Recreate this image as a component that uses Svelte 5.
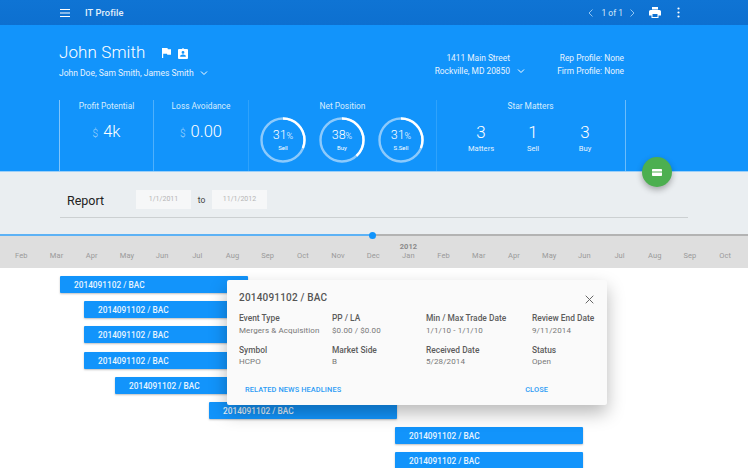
<script>
	const months = ['Feb', 'Mar', 'Apr', 'May', 'Jun', 'Jul', 'Aug', 'Sep', 'Oct', 'Nov', 'Dec', 'Jan', 'Feb', 'Mar', 'Apr', 'May', 'Jun', 'Jul', 'Aug', 'Sep', 'Oct'];
	const bars = [60, 84, 84, 84, 115, 209, 395, 395];
	const rings = [
		{ pct: 31, label: 'Sell' },
		{ pct: 38, label: 'Buy' },
		{ pct: 31, label: 'S.Sell' }
	];
	const stars = [
		{ n: 3, label: 'Matters' },
		{ n: 1, label: 'Sell' },
		{ n: 3, label: 'Buy' }
	];
	const fields = [
		['Event Type', 'Mergers & Acquisition'],
		['PP / LA', '$0.00 / $0.00'],
		['Min / Max Trade Date', '1/1/10 - 1/1/10'],
		['Review End Date', '9/11/2014'],
		['Symbol', 'HCPO'],
		['Market Side', 'B'],
		['Received Date', '5/28/2014'],
		['Status', 'Open']
	];
	const c = 2 * Math.PI * 21.5;
</script>

<div class="page">
	<header class="topbar">
		<svg class="menu" width="12" height="10" viewBox="0 0 12 10"><path d="M1 1.500h10M1 5h10M1 8.500h10" stroke="#fff" stroke-width="1.200" /></svg>
		<span class="apptitle">IT Profile</span>
		<div class="tools">
			<svg width="7" height="10" viewBox="0 0 7 10"><path d="M5.500 1.500 2 5l3.500 3.500" fill="none" stroke="#8fc4f2" stroke-width="1" /></svg>
			<span class="pager">1 of 1</span>
			<svg width="7" height="10" viewBox="0 0 7 10"><path d="M1.500 1.500 5 5 1.500 8.500" fill="none" stroke="#8fc4f2" stroke-width="1" /></svg>
			<svg class="print" width="12" height="11" viewBox="0 0 12 11"><path fill="#fff" d="M3 0h6v2.500H3zM1.500 3h9A1.500 1.500 0 0 1 12 4.500V8.500H9.500V11h-7V8.500H0V4.500A1.500 1.500 0 0 1 1.500 3zM3.500 7v3h5V7z" fill-rule="evenodd" /></svg>
			<svg class="more" width="3" height="11" viewBox="0 0 3 11"><circle cx="1.500" cy="1.500" r="1.100" fill="#fff" /><circle cx="1.500" cy="5.500" r="1.100" fill="#fff" /><circle cx="1.500" cy="9.500" r="1.100" fill="#fff" /></svg>
		</div>
	</header>

	<section class="hero">
		<div class="identity">
			<div class="who">
				<div class="name">
					<h1>John Smith</h1>
					<svg width="9" height="10" viewBox="0 0 9 10"><path fill="#fff" d="M0 0h5.500l.3 1.200H9v5.600H5.300L5 5.700H1.200V10H0z" /></svg>
					<svg width="10" height="11" viewBox="0 0 10 11"><path fill="#fff" fill-rule="evenodd" d="M1 1h2.800a1.300 1.300 0 0 1 2.400 0H9a1 1 0 0 1 1 1v8a1 1 0 0 1-1 1H1a1 1 0 0 1-1-1V2a1 1 0 0 1 1-1zM5 3a1.400 1.400 0 1 0 0 2.800A1.400 1.400 0 0 0 5 3zM2.200 8.800h5.600V8c0-1-1.900-1.500-2.800-1.500S2.200 7 2.200 8z" /></svg>
				</div>
				<div class="aliases">John Doe, Sam Smith, James Smith<svg class="chev" width="8" height="6" viewBox="0 0 8 6"><path d="M1 1.500 4 4.500l3-3" fill="none" stroke="#fff" stroke-width="1" /></svg></div>
			</div>
			<div class="address">
				<div>1411 Main Street</div>
				<div>Rockville, MD 20850<svg class="chev hang" width="8" height="6" viewBox="0 0 8 6"><path d="M1 1.500 4 4.500l3-3" fill="none" stroke="#fff" stroke-width="1" /></svg></div>
			</div>
			<div class="profiles">
				<div>Rep Profile: None</div>
				<div>Firm Profile: None</div>
			</div>
		</div>

		<div class="stats">
			<div class="stat">
				<h2>Profit Potential</h2>
				<div class="money"><small>$</small>4k</div>
			</div>
			<div class="stat">
				<h2>Loss Avoidance</h2>
				<div class="money"><small>$</small>0.00</div>
			</div>
			<div class="stat">
				<h2>Net Position</h2>
				<div class="rings">
					{#each rings as r}
						<div class="ring">
							<svg width="46" height="46" viewBox="0 0 46 46">
								<circle cx="23" cy="23" r="21.500" fill="none" stroke="#8ccafc" stroke-width="2.400" />
								<circle cx="23" cy="23" r="21.500" fill="none" stroke="#fff" stroke-width="2.400" stroke-dasharray="{(c * r.pct) / 100} {c}" transform="rotate(-90 23 23)" />
							</svg>
							<div class="ringtext">
								<span class="pct">{r.pct}<small>%</small></span>
								<span class="ringlabel">{r.label}</span>
							</div>
						</div>
					{/each}
				</div>
			</div>
			<div class="stat">
				<h2>Star Matters</h2>
				<div class="stars">
					{#each stars as s}
						<div class="star">
							<span class="num">{s.n}</span>
							<span class="starlabel">{s.label}</span>
						</div>
					{/each}
				</div>
			</div>
		</div>

		<button class="fab" aria-label="Summary">
			<svg width="10" height="7" viewBox="0 0 10 7"><path fill="#fff" d="M.8 0h8.400a.8.800 0 0 1 .8.800V2.600H0V.8A.8.800 0 0 1 .8 0zM0 3.400h10v2.800a.8.800 0 0 1-.8.800H.8a.8.800 0 0 1-.8-.8z" /></svg>
		</button>
	</section>

	<section class="report">
		<div class="reportrow">
			<h3>Report</h3>
			<div class="date">1/1/2011</div>
			<span class="to">to</span>
			<div class="date">11/1/2012</div>
		</div>
	</section>

	<div class="slider">
		<span class="dot"></span>
	</div>
	<div class="timeline">
		{#each months as m, i}
			<div class="month">
				{#if i === 11}<b>2012</b>{/if}
				{m}
			</div>
		{/each}
	</div>

	<section class="gantt">
		{#each bars as left}
			<div class="bar" style="margin-left: {left}px">2014091102 / BAC</div>
		{/each}

		<div class="popover">
			<div class="pophead">
				<h4>2014091102 / BAC</h4>
				<svg width="9" height="9" viewBox="0 0 9 9"><path d="M.7.7l7.600 7.600M8.300.7.700 8.300" stroke="#666" stroke-width="1" /></svg>
			</div>
			<div class="fields">
				{#each fields as [label, value]}
					<div class="field">
						<div class="flabel">{label}</div>
						<div class="fvalue">{value}</div>
					</div>
				{/each}
			</div>
			<div class="actions">
				<span>RELATED NEWS HEADLINES</span>
				<span>CLOSE</span>
			</div>
		</div>
	</section>
</div>

<style>
	:global(body) {
		margin: 0;
		overflow: hidden;
		background: #fff;
	}

	.page {
		position: relative;
		width: 748px;
		height: 468px;
		overflow: hidden;
		font-family: Roboto, 'Liberation Sans', sans-serif;
		color: #fff;
	}

	.topbar {
		height: 25px;
		display: flex;
		align-items: center;
		padding-left: 59px;
		background: linear-gradient(#0f74d4, #0d70d0);
		box-sizing: border-box;
	}

	.apptitle {
		margin-left: 14px;
		font-size: 9.300px;
		font-weight: 500;
		letter-spacing: 0.1px;
		color: #e3f0fb;
	}

	.tools {
		margin-left: auto;
		margin-right: 68px;
		display: flex;
		align-items: center;
	}

	.pager {
		margin: 0 6px 0 7px;
		font-size: 8.500px;
		color: #d5e7f8;
	}

	.print {
		margin-left: 13px;
	}

	.more {
		margin-left: 16px;
	}

	.hero {
		position: relative;
		height: 147px;
		box-sizing: border-box;
		background: #1294fb;
		border-bottom: 1px solid #9ccff8;
	}

	.identity {
		height: 75px;
		display: flex;
		padding: 18px 0 0 59px;
		box-sizing: border-box;
	}

	.who {
		width: 315px;
	}

	.name {
		display: flex;
		align-items: center;
		height: 18px;
	}

	.name h1 {
		margin: 0 16px 0 0;
		font-size: 17px;
		font-weight: 300;
		line-height: 18px;
		letter-spacing: 0.1px;
	}

	.name svg {
		margin-top: 2px;
	}

	.name svg + svg {
		margin-left: 7px;
	}

	.aliases {
		margin-top: 6px;
		font-size: 8.500px;
		line-height: 13px;
		color: #e6f3fe;
	}

	.chev {
		margin-left: 6px;
		vertical-align: 0;
	}

	.chev.hang {
		margin: 0 -15px 0 7px;
	}

	.address,
	.profiles {
		font-size: 8.400px;
		line-height: 13px;
		text-align: right;
		color: #e6f3fe;
		padding-top: 9px;
		white-space: nowrap;
	}

	.address {
		width: 136px;
	}

	.profiles {
		width: 114px;
	}

	.stats {
		display: grid;
		grid-template-columns: 94px 95px 188px 188px;
		margin-left: 59px;
		width: 566px;
		height: 71px;
		border-right: 1px solid #6bbcfb;
	}

	.stat {
		border-left: 1px solid #4fb0fb;
		text-align: center;
		min-width: 0;
	}

	.stat:first-child {
		border-left-color: #7fc5fc;
	}

	.stat:nth-child(3),
	.stat:nth-child(4) {
		border-left-color: #2fa2fb;
	}

	.stat h2 {
		margin: 1px 0 0;
		font-size: 8.400px;
		font-weight: 400;
		line-height: 11px;
		color: #d7ecfd;
	}

	.money {
		margin-top: 10px;
		font-size: 16.500px;
		font-weight: 300;
		line-height: 20px;
	}

	.money small {
		font-size: 10px;
		margin-right: 5px;
		color: #a7d7fd;
	}

	.rings {
		display: flex;
		justify-content: center;
		gap: 13px;
		margin-top: 5px;
		padding-right: 1px;
	}

	.ring {
		position: relative;
		width: 46px;
		height: 46px;
	}

	.ring svg {
		display: block;
	}

	.ringtext {
		position: absolute;
		inset: 0;
		display: flex;
		flex-direction: column;
		align-items: center;
		justify-content: center;
	}

	.pct {
		font-size: 12.500px;
		font-weight: 300;
		line-height: 14px;
	}

	.pct small {
		font-size: 9px;
	}

	.ringlabel {
		font-size: 6px;
		line-height: 9px;
		margin-bottom: 1px;
	}

	.stars {
		display: flex;
		justify-content: center;
		margin-top: 9px;
		padding-left: 5px;
	}

	.star {
		width: 52px;
		display: flex;
		flex-direction: column;
		align-items: center;
	}

	.num {
		font-size: 17px;
		font-weight: 300;
		line-height: 22px;
	}

	.starlabel {
		font-size: 7.600px;
		line-height: 10px;
		margin-top: 1px;
		color: #e6f3fe;
	}

	.fab {
		position: absolute;
		left: 642px;
		top: 132px;
		width: 30px;
		height: 30px;
		padding: 0;
		border: 0;
		border-radius: 50%;
		background: #4caf50;
		display: flex;
		align-items: center;
		justify-content: center;
		box-shadow: 0 3px 6px rgba(0, 0, 0, 0.3);
		z-index: 2;
	}

	.report {
		height: 62px;
		background: #eaeef1;
		padding: 18px 60px 0;
		box-sizing: border-box;
	}

	.reportrow {
		display: flex;
		align-items: center;
		height: 19px;
		padding-bottom: 8px;
		border-bottom: 1px solid #ccd0d2;
		width: 628px;
	}

	.reportrow h3 {
		margin: 2px 0 0 7px;
		width: 69px;
		font-size: 12.500px;
		font-weight: 400;
		color: #222;
	}

	.date {
		width: 55px;
		height: 19px;
		background: #f6f7f8;
		font-size: 7px;
		line-height: 19px;
		text-align: center;
		color: #b5b5b5;
	}

	.to {
		width: 21px;
		text-align: center;
		font-size: 8.500px;
		color: #444;
	}

	.slider {
		position: relative;
		height: 2px;
		background: linear-gradient(to right, #5db2f5 372px, #b3b3b3 372px);
	}

	.dot {
		position: absolute;
		left: 369px;
		top: -2.500px;
		width: 7px;
		height: 7px;
		border-radius: 50%;
		background: #1294fb;
	}

	.timeline {
		height: 32px;
		display: flex;
		padding-left: 3.800px;
		background: #dedede;
	}

	.month {
		position: relative;
		width: 35.200px;
		flex: none;
		text-align: center;
		font-size: 7.500px;
		line-height: 10px;
		padding-top: 15px;
		color: #9a9a9a;
		box-sizing: border-box;
		letter-spacing: 0.1px;
	}

	.month b {
		position: absolute;
		left: 0;
		right: 0;
		top: 6px;
		font-size: 7.500px;
		color: #8a8a8a;
	}

	.gantt {
		position: relative;
		padding-top: 8px;
		background: #fff;
	}

	.bar {
		width: 188px;
		height: 17px;
		margin-bottom: 8.200px;
		padding-left: 14px;
		box-sizing: border-box;
		background: #1294fb;
		border-radius: 1px;
		box-shadow: 0 1px 2px rgba(0, 0, 0, 0.25);
		font-size: 8.300px;
		font-weight: 500;
		line-height: 18px;
		color: #e8f4fe;
	}

	.popover {
		position: absolute;
		left: 227px;
		top: 12px;
		width: 380px;
		height: 125px;
		padding: 12px 12px 0;
		box-sizing: border-box;
		background: #fafafa;
		border-radius: 2px;
		box-shadow: 0 8px 18px rgba(0, 0, 0, 0.28);
		color: #444;
	}

	.pophead {
		display: flex;
		justify-content: space-between;
		align-items: center;
		height: 12px;
	}

	.pophead svg {
		margin: 2px 1px 0 0;
	}

	.pophead h4 {
		margin: 0;
		font-size: 10px;
		font-weight: 500;
		line-height: 12px;
		letter-spacing: 0.2px;
		color: #555;
	}

	.fields {
		display: grid;
		grid-template-columns: 93px 94px 106px 80px;
		row-gap: 6.500px;
		margin-top: 8px;
	}

	.flabel {
		font-size: 8.400px;
		font-weight: 500;
		line-height: 12.500px;
		color: #5c5c5c;
		white-space: nowrap;
	}

	.fvalue {
		font-size: 8px;
		line-height: 12.500px;
		color: #777;
		white-space: nowrap;
		letter-spacing: 0.1px;
	}

	.actions {
		display: flex;
		justify-content: space-between;
		margin: 16px 0 0 6px;
		width: 303px;
		font-size: 7.400px;
		font-weight: 500;
		line-height: 10px;
		letter-spacing: 0.1px;
		color: #2d9cf5;
	}
</style>
